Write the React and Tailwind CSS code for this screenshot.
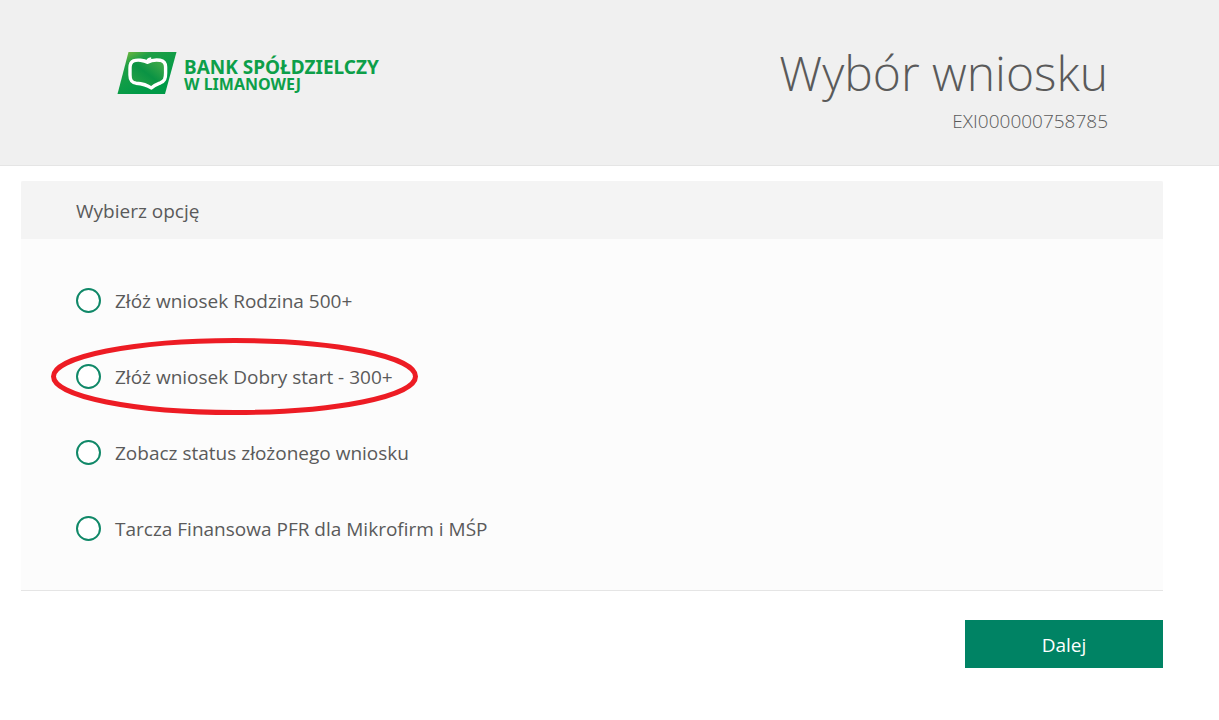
import { useState } from "react";

const options = [
    { id: "rodzina-500", label: "Złóż wniosek Rodzina 500+" },
    { id: "dobry-start-300", label: "Złóż wniosek Dobry start - 300+", highlighted: true },
    { id: "status", label: "Zobacz status złożonego wniosku" },
    { id: "tarcza-pfr", label: "Tarcza Finansowa PFR dla Mikrofirm i MŚP" },
];

function Logo() {
    return (
        <div className="flex items-center gap-[7px] text-[#0d9f49]">
            <svg width="60" height="44" viewBox="0 0 60 44" aria-hidden="true">
                <defs>
                    <linearGradient id="logoFill" x1="0" y1="0" x2="0.6" y2="0.8">
                        <stop offset="0" stopColor="#8cc03c" />
                        <stop offset="0.35" stopColor="#1f9f46" />
                        <stop offset="1" stopColor="#009a47" />
                    </linearGradient>
                    <linearGradient id="appleFill" x1="0" y1="1" x2="1" y2="0">
                        <stop offset="0" stopColor="#2ea647" />
                        <stop offset="0.5" stopColor="#0a9344" />
                        <stop offset="1" stopColor="#4fb04a" />
                    </linearGradient>
                </defs>
                <path d="M11.5 1H59.5L48 43H0.5Z" fill="url(#logoFill)" />
                <path
                    d="M30.5 11.3C27 9 20 8.6 16.5 9.8C13.5 11 13 13 13 17V24C13 29 14.5 31.3 19 32.2C25 32.6 29.5 33.5 34.3 37C38 33.8 40.5 33 43.5 31.8C47.5 30 48.6 28 48.6 22V16C48.6 12 47 10 43 9.2C38.5 8.6 34 9.2 30.5 11.3Z"
                    fill="url(#appleFill)"
                    stroke="#fff"
                    strokeWidth="3.4"
                    strokeLinejoin="round"
                />
                <path d="M29.5 11.5C30 8.8 31.5 7.6 34.2 7.4" fill="none" stroke="#fff" strokeWidth="2.2" />
            </svg>
            <div className="pt-[6px] font-['Noto_Sans','Open_Sans',sans-serif] font-bold whitespace-nowrap">
                <div className="text-[19px] leading-[17px]">BANK SPÓŁDZIELCZY</div>
                <div className="text-[16px] leading-[17px]">W LIMANOWEJ</div>
            </div>
        </div>
    );
}

function Option({ option, checked, onChange }) {
    return (
        <label htmlFor={option.id} className="relative flex items-center gap-[14px] w-fit cursor-pointer">
            <input
                type="radio"
                id={option.id}
                name="application"
                value={option.id}
                checked={checked}
                onChange={onChange}
                className="appearance-none size-[25px] shrink-0 rounded-full border-2 border-[#108868] bg-white checked:bg-[#008364] checked:shadow-[inset_0_0_0_4px_#fff]"
            />
            <span className="leading-[24px]">{option.label}</span>
            {option.highlighted && (
                <svg
                    className="absolute -left-[25px] -top-[26px] w-[367px] h-[77px] pointer-events-none"
                    viewBox="0 0 367 77"
                    aria-hidden="true"
                >
                    <ellipse cx="183.5" cy="38.5" rx="181" ry="36" fill="none" stroke="#ed1c24" strokeWidth="5" />
                </svg>
            )}
        </label>
    );
}

export default function App() {
    const [selected, setSelected] = useState(null);

    return (
        <div className="min-h-screen bg-white font-['Open_Sans',sans-serif] text-[19px] text-[#5a5a5a]">
            <header className="flex items-start justify-between pl-[117px] pr-[111px] pt-[43px] pb-[32px] bg-[#f0f0f0] border-b border-[#e5e5e5]">
                <div className="pt-[8px]">
                    <Logo />
                </div>
                <div className="text-right font-light">
                    <h1 className="text-[48px] leading-[60px]">Wybór wniosku</h1>
                    <p className="pt-[6px] leading-[24px]">EXI000000758785</p>
                </div>
            </header>

            <main className="pl-[21px] pr-[56px] pt-[15px]">
                <form onSubmit={(e) => e.preventDefault()}>
                    <fieldset className="bg-[#fcfcfc] border-b border-[#e5e5e5]">
                        <legend className="float-left w-full px-[55px] pt-[18px] pb-[16px] leading-[24px] bg-[#f4f4f4] rounded-t-xs">
                            Wybierz opcję
                        </legend>
                        <div className="clear-both flex flex-col gap-[51px] px-[55px] py-[49px]">
                            {options.map((option) => (
                                <Option
                                    key={option.id}
                                    option={option}
                                    checked={selected === option.id}
                                    onChange={() => setSelected(option.id)}
                                />
                            ))}
                        </div>
                    </fieldset>

                    <div className="flex justify-end pt-[29px] pb-[32px]">
                        <button
                            type="submit"
                            className="w-[198px] h-[48px] pt-[2px] bg-[#008364] hover:bg-[#00735a] text-white cursor-pointer"
                        >
                            Dalej
                        </button>
                    </div>
                </form>
            </main>
        </div>
    );
}
